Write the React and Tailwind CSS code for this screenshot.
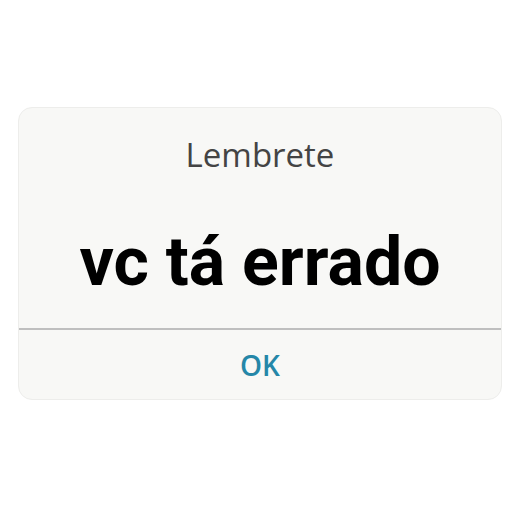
export default function App() {
  return (
    <div className="h-[512px] w-[512px] bg-white pt-[107px] pl-[18px]">
      <div className="flex h-[293px] w-[484px] flex-col overflow-hidden rounded-[14px] border border-[#ededeb] bg-[#f8f8f6]">
        <div className="flex h-[220px] flex-col items-center">
          <p className="mt-[30px] font-['Open_Sans',sans-serif] text-[33px] font-medium leading-none text-[#444444]">
            Lembrete
          </p>
          <p className="mt-[57px] font-['Roboto',sans-serif] text-[68px] font-bold leading-none text-black">
            vc tá errado
          </p>
        </div>
        <div className="h-[2px] bg-[#bfbfbf]" />
        <div className="flex flex-1 items-center justify-center">
          <span className="font-['Open_Sans',sans-serif] text-[28px] font-semibold leading-none text-[#2587a8]">
            OK
          </span>
        </div>
      </div>
    </div>
  );
}
